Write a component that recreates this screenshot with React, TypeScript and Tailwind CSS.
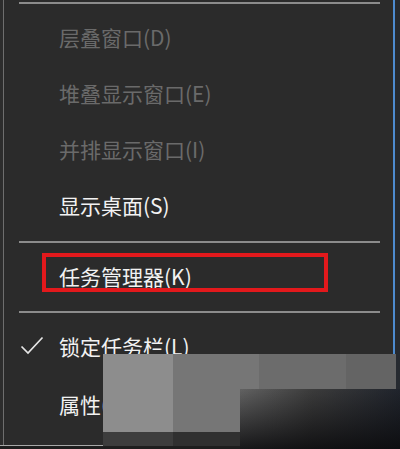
import React from "react";

const Item = ({
  label,
  disabled,
  checked,
  h,
}: {
  label: string;
  disabled?: boolean;
  checked?: boolean;
  h: string;
}) => (
  <div className={`flex items-center ${h}`}>
    <div className="w-[55px] pl-[16px] flex items-center">
      {checked && (
        <svg width="24" height="20" viewBox="0 0 24 20" fill="none">
          <path d="M1.5 10.5 L8 17 L22.5 1.5" stroke="#e6e6e6" strokeWidth="1.7" />
        </svg>
      )}
    </div>
    <span
      className={`text-[21px] leading-none ${disabled ? "text-[#6a6a6a]" : "text-[#f2f2f2]"}`}
    >
      {label}
    </span>
  </div>
);

export default function App() {
  return (
    <div className="w-[400px] h-[449px] bg-[#2b2b2b] relative overflow-hidden flex flex-col font-['Noto_Sans_CJK_SC','Noto_Sans',sans-serif]">
      <div className="flex h-[445px]">
        <div className="w-[3px] bg-[#2d2d2d]" />
        <div className="w-px bg-[#6e6e6e]" />
        <div className="flex-1 flex flex-col">
          <div className="h-[2px]" />
          <div className="h-[2px] bg-[#8c8c8c] ml-[15px] mr-[13px]" />
          <div className="h-[5px]" />
          <Item label="层叠窗口(D)" disabled h="h-[56px]" />
          <Item label="堆叠显示窗口(E)" disabled h="h-[56px]" />
          <Item label="并排显示窗口(I)" disabled h="h-[56px]" />
          <Item label="显示桌面(S)" h="h-[56px]" />
          <div className="h-[8px]" />
          <div className="h-[2px] bg-[#8c8c8c] ml-[15px] mr-[13px]" />
          <Item label="任务管理器(K)" h="h-[66px]" />
          <div className="h-[2px]" />
          <div className="h-[2px] bg-[#8c8c8c] ml-[15px] mr-[13px]" />
          <Item label="锁定任务栏(L)" checked h="h-[66px]" />
          <Item label="属性(R)" h="h-[50px]" />
        </div>
        <div className="w-[2px] bg-[#4d8bd0]" />
        <div className="w-[5px] bg-[#262a30]" />
      </div>
      <div className="h-px bg-[#a8a8a8]" />
      <div className="flex-1 bg-[#1e1e1e]" />

      {/* red annotation box */}
      <div className="absolute left-[42px] top-[253px] w-[286px] h-[39px] border-[4px] border-[#e3191c]" />

      {/* watermark blocks */}
      <div className="absolute left-[103px] top-[354px] w-[293px] h-[92px] flex">
        <div className="w-[70px] flex flex-col">
          <div className="h-[78px] bg-[#8d8d8d]" />
          <div className="flex-1 bg-[#3d3d3d]" />
        </div>
        <div className="w-[86px] flex flex-col">
          <div className="h-[78px] bg-[#767676]" />
          <div className="flex-1 bg-[#303030]" />
        </div>
        <div className="w-[87px] flex flex-col">
          <div className="h-[78px] bg-[#6c6c6c]" />
          <div className="flex-1 bg-[#2c2c2c]" />
        </div>
        <div className="flex-1 flex flex-col">
          <div className="h-[78px] bg-[#646464]" />
          <div className="flex-1 bg-[#2a2a2a]" />
        </div>
      </div>
      <div className="absolute left-[240px] top-[389px] w-[160px] h-[60px] bg-[linear-gradient(to_right,#626262,#3c3c3c_45%,#20242c)]">
        <div className="w-full h-full bg-[linear-gradient(to_bottom,transparent,rgba(10,10,12,0.85))]" />
      </div>
    </div>
  );
}
